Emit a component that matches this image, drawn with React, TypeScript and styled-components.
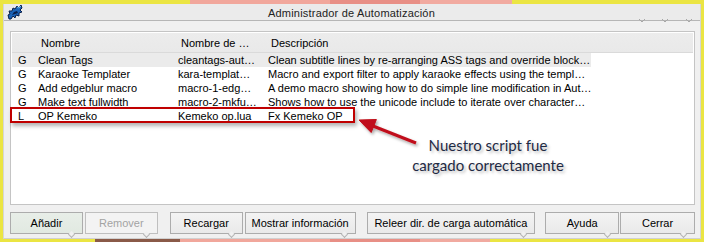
import React from 'react';
import styled, { createGlobalStyle } from 'styled-components';

const GlobalStyle = createGlobalStyle`
  html, body {
    margin: 0;
    padding: 0;
  }
  body {
    width: 704px;
    height: 242px;
    overflow: hidden;
    background:
      linear-gradient(
        to right,
        #ebe543 0 190px,
        #f1a79c 190px 330px,
        #e88f86 330px 420px,
        #f1aaa0 420px 512px,
        #ebe543 512px
      ) top / 100% 121px no-repeat,
      linear-gradient(
        to right,
        #ebe543 0 95px,
        #8a5a48 95px 180px,
        #f1a79c 180px 330px,
        #e88f86 330px 420px,
        #f1aaa0 420px 490px,
        #ebe543 490px
      ) bottom / 100% 121px no-repeat;
    font-family: 'Liberation Sans', Arial, sans-serif;
  }
`;

const Window = styled.div`
  box-sizing: border-box;
  margin: 4px 3px 0 3px;
  width: 698px;
  height: 235px;
  background: #f0f0f0;
  border-left: 1px solid #d6d6d6;
  border-right: 1px solid #d6d6d6;
  border-bottom: 1px solid #d0d0d0;
  display: flex;
  flex-direction: column;
`;

const TitleBar = styled.div`
  position: relative;
  height: 16px;
  flex: none;
  display: flex;
  align-items: center;
  background: #ebebeb;
  border-bottom: 1px solid #b6b6b6;
  padding-left: 2px;
`;

const Title = styled.span`
  flex: 1;
  text-align: center;
  font-size: 11px;
  letter-spacing: 0.2px;
  color: #222;
  margin-right: 20px;
  padding-top: 1px;
`;

const Notches = styled.svg`
  position: absolute;
  right: 7px;
  bottom: -4px;
`;

const Body = styled.div`
  flex: 1;
  display: flex;
  flex-direction: column;
  padding: 10px 5px 5px 6px;
`;

const ListPanel = styled.div`
  position: relative;
  box-sizing: border-box;
  height: 174px;
  background: #fff;
  border: 1px solid #c4c4c4;
  padding: 1px 0 0 1px;
  font-size: 11px;
  color: #000;
`;

const Columns = '22px 140px 90px 327px';

const HeaderRow = styled.div`
  display: grid;
  grid-template-columns: ${Columns};
  height: 19px;
  align-items: center;
  margin-right: 1px;
  border-bottom: 1px solid #dadada;
  background: linear-gradient(#ececec, #e9e9e9);
  & > span {
    padding-left: 7px;
  }
`;

const Row = styled.div<{ $selected?: boolean }>`
  display: grid;
  grid-template-columns: ${Columns};
  width: 579px;
  height: 14px;
  align-items: center;
  background: ${({ $selected }) => ($selected ? '#ebebeb' : 'transparent')};
  & > span {
    padding-left: 4px;
    white-space: nowrap;
    overflow: hidden;
  }
  & > span:first-child {
    padding-left: 6px;
  }
`;

const Highlight = styled.div`
  position: absolute;
  left: -1px;
  top: 75px;
  width: 345px;
  height: 16px;
  box-sizing: border-box;
  border: 2px solid #c00000;
  box-shadow: 2px 3px 4px rgba(0, 0, 0, 0.3);
`;

const Arrow = styled.svg`
  position: absolute;
  left: 345px;
  top: 80px;
  overflow: visible;
`;

const Callout = styled.div`
  position: absolute;
  left: 388px;
  top: 103px;
  width: 178px;
  text-align: center;
  font-family: Lato, 'Open Sans', sans-serif;
  font-size: 15px;
  line-height: 20px;
  color: #1f2a44;
  text-shadow: 2px 2px 3px rgba(0, 0, 0, 0.28);
`;

const ButtonRow = styled.div`
  display: flex;
  margin-top: 7px;
`;

const Button = styled.button<{ $w: number; $ml?: number; $active?: boolean }>`
  position: relative;
  box-sizing: border-box;
  width: ${({ $w }) => $w}px;
  height: 22px;
  margin-left: ${({ $ml }) => $ml ?? 0}px;
  padding: 0;
  border: 1px solid #acacac;
  border-radius: 0;
  background: ${({ $active }) =>
    $active
      ? 'linear-gradient(#e8eee8, #e1e9e1)'
      : 'linear-gradient(#f3f3f3, #e9e9e9)'};
  font-family: 'Liberation Sans', Arial, sans-serif;
  font-size: 11px;
  color: #000;
  &:disabled {
    color: #a3a3a3;
    background: #f3f3f3;
    border-color: #bfbfbf;
  }
  &::after {
    content: '';
    position: absolute;
    right: 8px;
    bottom: -4px;
    width: 4px;
    height: 4px;
    border-right: 1px solid #b4b4b4;
    border-bottom: 1px solid #b4b4b4;
    background: #f0f0f0;
    transform: rotate(45deg);
  }
`;

const AppIcon = () => (
  <svg width="17" height="16" viewBox="0 0 17 16">
    <path
      d="M3 15 L2 11 L4 10 L3 7 L6 7 L7 4 L9 5 L11 2 L13 4 L15 1 L16 4 L14 6 L16 8 L13 9 L13 12 L10 11 L9 14 L7 12 L5 15 Z"
      fill="#1c64b8"
      stroke="#0a1f4a"
      strokeWidth="1"
    />
    <path d="M6 11 L8 8 L11 7 L12 9 L9 10 Z" fill="#0a1f4a" />
    <path d="M11 3 L13 4 L15 2" stroke="#5fb6f0" strokeWidth="1" fill="none" />
  </svg>
);

const scripts = [
  {
    type: 'G',
    name: 'Clean Tags',
    file: 'cleantags-aut…',
    desc: 'Clean subtitle lines by re-arranging ASS tags and override block…',
  },
  {
    type: 'G',
    name: 'Karaoke Templater',
    file: 'kara-templat…',
    desc: 'Macro and export filter to apply karaoke effects using the templ…',
  },
  {
    type: 'G',
    name: 'Add edgeblur macro',
    file: 'macro-1-edg…',
    desc: 'A demo macro showing how to do simple line modification in Aut…',
  },
  {
    type: 'G',
    name: 'Make text fullwidth',
    file: 'macro-2-mkfu…',
    desc: 'Shows how to use the unicode include to iterate over character…',
  },
  { type: 'L', name: 'OP Kemeko', file: 'Kemeko op.lua', desc: 'Fx Kemeko OP' },
];

export default function App() {
  return (
    <>
      <GlobalStyle />
      <Window>
        <TitleBar>
          <AppIcon />
          <Title>Administrador de Automatización</Title>
          <Notches width="54" height="6" viewBox="0 0 54 6">
            <path
              d="M0 1 L3 4 L6 1 M23 1 L26 4 L29 1 M47 1 L50 4 L53 1"
              stroke="#a8a8a8"
              fill="none"
            />
          </Notches>
        </TitleBar>
        <Body>
          <ListPanel>
            <HeaderRow>
              <span />
              <span>Nombre</span>
              <span>Nombre de …</span>
              <span>Descripción</span>
            </HeaderRow>
            {scripts.map((s, i) => (
              <Row key={s.name} $selected={i === 0}>
                <span>{s.type}</span>
                <span>{s.name}</span>
                <span>{s.file}</span>
                <span>{s.desc}</span>
              </Row>
            ))}
            <Highlight />
            <Arrow width="75" height="40" viewBox="0 0 75 40">
              <defs>
                <filter id="sh" x="-20%" y="-20%" width="160%" height="160%">
                  <feDropShadow dx="1.5" dy="2" stdDeviation="1.5" floodOpacity="0.35" />
                </filter>
              </defs>
              <g filter="url(#sh)" fill="#c0101a" stroke="#c0101a">
                <line x1="17" y1="14" x2="60" y2="31" strokeWidth="3" />
                <polygon points="3,8 15.2,20.5 20.4,7.5" strokeWidth="1" />
              </g>
            </Arrow>
            <Callout>
              Nuestro script fue
              <br />
              cargado correctamente
            </Callout>
          </ListPanel>
          <ButtonRow>
            <Button $w={73} $ml={0} $active>
              Añadir
            </Button>
            <Button $w={73} $ml={2} disabled>
              Remover
            </Button>
            <Button $w={73} $ml={12}>
              Recargar
            </Button>
            <Button $w={111} $ml={2}>
              Mostrar información
            </Button>
            <Button $w={169} $ml={11}>
              Releer dir. de carga automática
            </Button>
            <Button $w={74} $ml={10}>
              Ayuda
            </Button>
            <Button $w={75} $ml={1}>
              Cerrar
            </Button>
          </ButtonRow>
        </Body>
      </Window>
    </>
  );
}
